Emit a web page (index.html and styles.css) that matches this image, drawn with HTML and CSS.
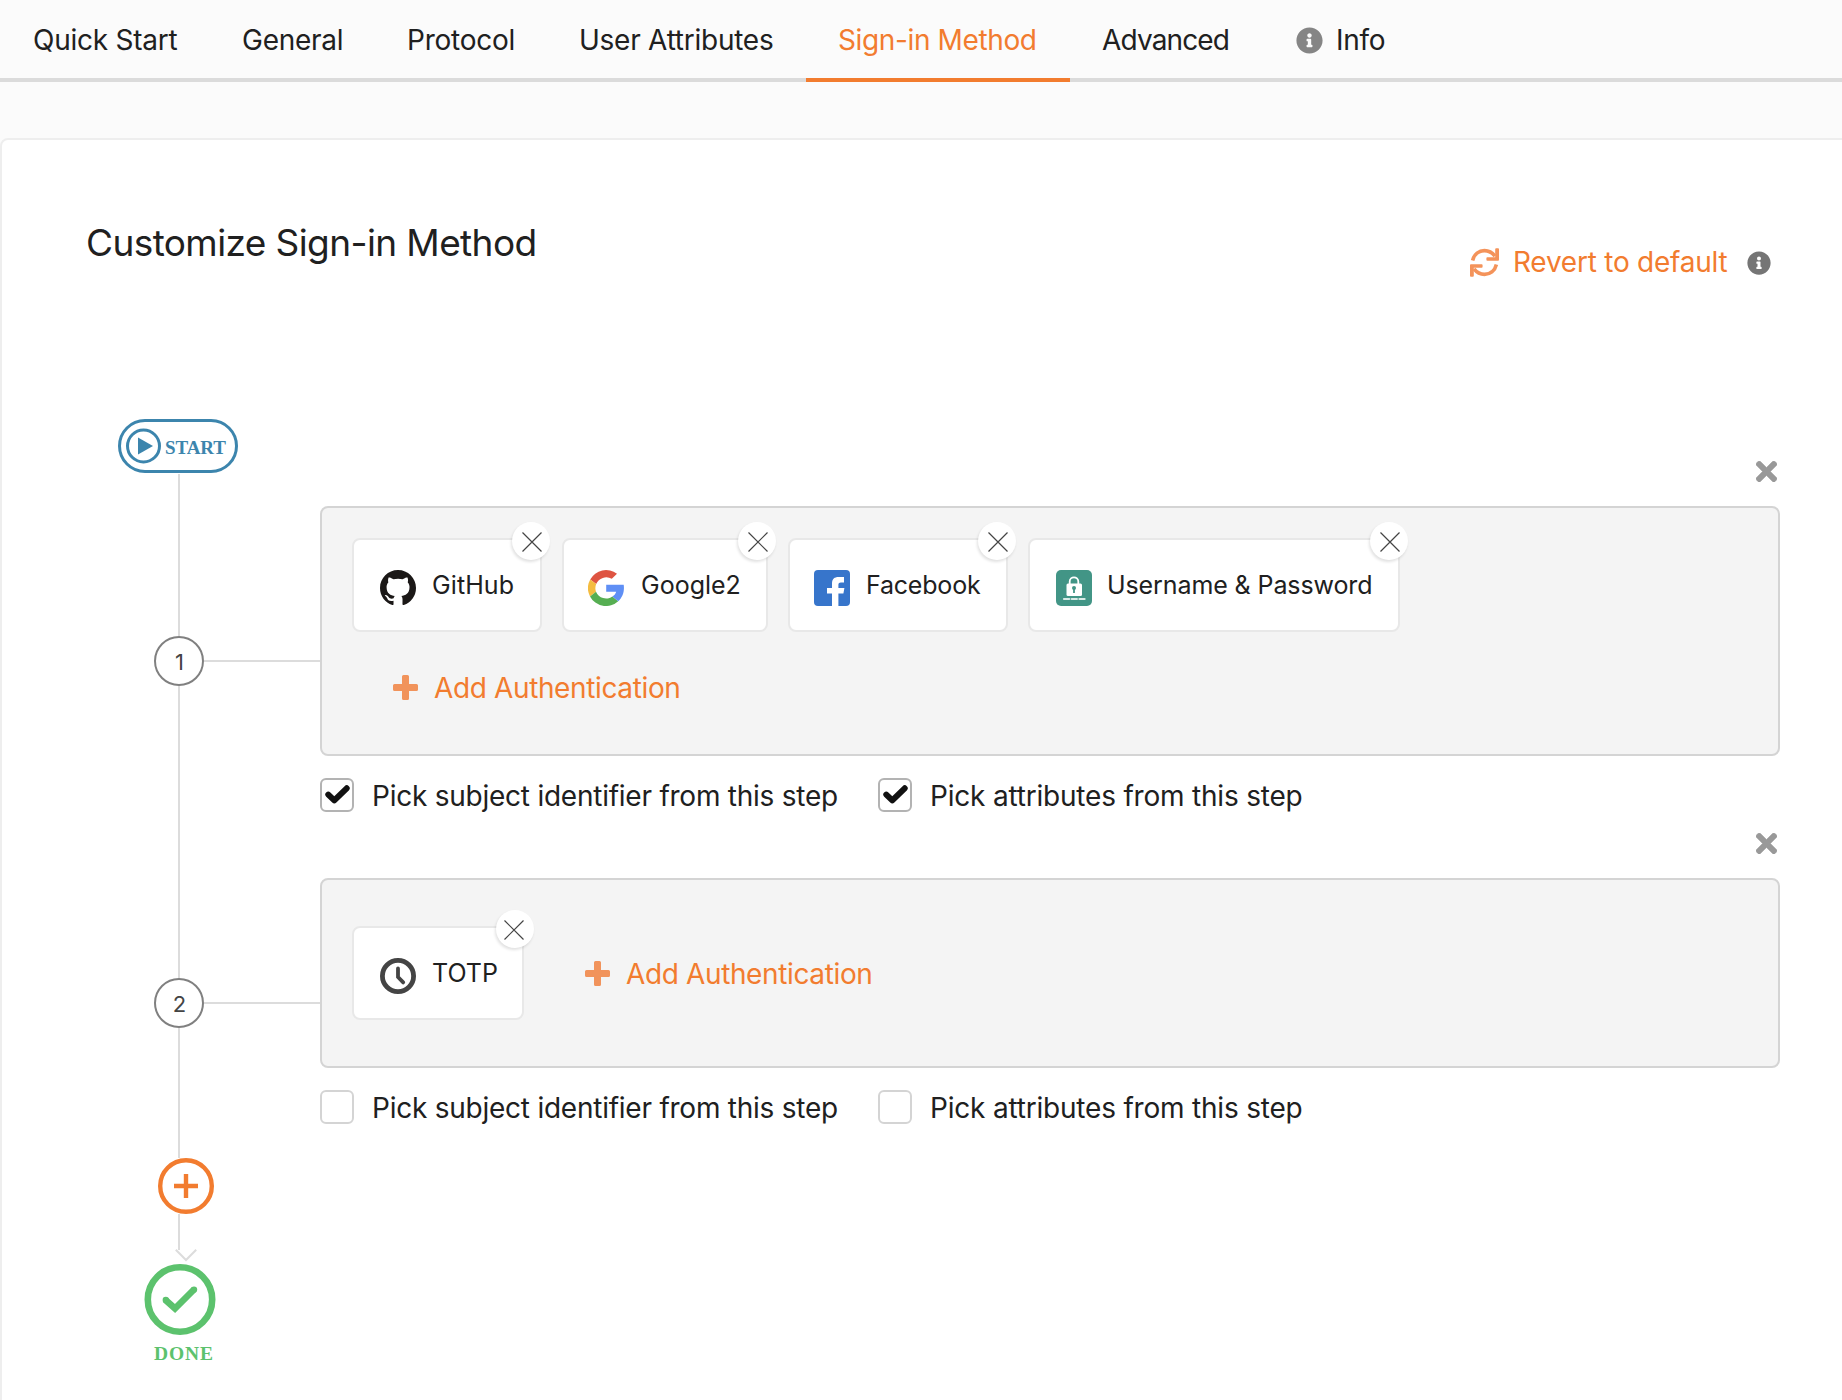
FILE: index.html
```html
<!DOCTYPE html>
<html lang="en">
<head>
<meta charset="utf-8">
<title>Sign-in Method</title>
<link rel="stylesheet" href="styles.css">
</head>
<body>
<svg class="defs" width="0" height="0" aria-hidden="true">
  <symbol id="i-info" viewBox="0 0 512 512"><path fill="currentColor" d="M256 8C119 8 8 119 8 256s111 248 248 248 248-111 248-248S393 8 256 8zm0 110c23.200 0 42 18.800 42 42s-18.800 42-42 42-42-18.800-42-42 18.800-42 42-42zm56 254c0 6.600-5.400 12-12 12h-88c-6.600 0-12-5.400-12-12v-24c0-6.600 5.400-12 12-12h12v-64h-12c-6.600 0-12-5.400-12-12v-24c0-6.600 5.400-12 12-12h64c6.600 0 12 5.400 12 12v100h12c6.600 0 12 5.400 12 12v24z"/></symbol>
  <symbol id="i-times" viewBox="0 0 352 352"><path fill="currentColor" stroke="currentColor" stroke-width="8" d="M242.720 176l100.070-100.070c12.280-12.280 12.280-32.190 0-44.480l-22.240-22.240c-12.280-12.280-32.190-12.280-44.480 0L176 109.280 75.930 9.210c-12.280-12.280-32.190-12.280-44.480 0L9.210 31.450c-12.280 12.280-12.280 32.190 0 44.480L109.280 176 9.210 276.070c-12.280 12.280-12.280 32.190 0 44.480l22.240 22.240c12.280 12.280 32.200 12.280 44.480 0L176 242.720l100.070 100.070c12.280 12.280 32.200 12.280 44.480 0l22.240-22.240c12.280-12.280 12.280-32.190 0-44.480L242.720 176z"/></symbol>
  <symbol id="i-plus" viewBox="0 0 25 25"><path fill="currentColor" d="M10.500 0h4a1.500 1.500 0 0 1 1.500 1.500V9h7.500a1.500 1.500 0 0 1 1.500 1.500v4a1.500 1.500 0 0 1-1.500 1.500H16v7.500a1.500 1.500 0 0 1-1.500 1.500h-4A1.500 1.500 0 0 1 9 23.500V16H1.500A1.500 1.500 0 0 1 0 14.500v-4A1.500 1.500 0 0 1 1.500 9H9V1.500A1.500 1.500 0 0 1 10.500 0z"/></symbol>
  <symbol id="i-close" viewBox="0 0 20 20"><path d="M.5.5l19 19M19.500.5l-19 19" stroke="currentColor" stroke-width="1.200"/></symbol>
  <symbol id="i-tick" viewBox="0 0 25 19"><path d="M3.300 9.600l6 5.800L21.700 3.300" fill="none" stroke="currentColor" stroke-width="6" stroke-linecap="round" stroke-linejoin="round"/></symbol>
</svg>

<nav class="tabs">
  <a class="tab"><span>Quick Start</span></a>
  <a class="tab"><span>General</span></a>
  <a class="tab"><span>Protocol</span></a>
  <a class="tab"><span>User Attributes</span></a>
  <a class="tab tab-active"><span>Sign-in Method</span></a>
  <a class="tab tab-advanced"><span>Advanced</span></a>
  <a class="tab tab-info"><svg class="tab-icon"><use href="#i-info"/></svg><span>Info</span></a>
</nav>

<main class="panel">
  <header class="panel-head">
    <h1 class="title">Customize Sign-in Method</h1>
    <div class="revert">
      <svg class="revert-icon" viewBox="0 0 29 29"><g fill="none" stroke="currentColor" stroke-width="3.600"><path d="M2.600 12.500C4.200 6 9 2.600 14.500 2.600c4.500 0 7.800 2 10.500 5.500"/><path d="M26.400 16.500c-1.600 6.500-6.400 9.900-11.900 9.900-4.500 0-7.800-2-10.500-5.500"/></g><path fill="currentColor" d="M25.200 1.200A.9.900 0 0 1 26.100.300h2A.9.900 0 0 1 29 1.200v10.600a.9.900 0 0 1-.9.900H17.300a.9.900 0 0 1-.9-.9V10.200a.9.900 0 0 1 .9-.9h7.900zM3.800 27.800a.9.900 0 0 1-.9.900h-2a.9.900 0 0 1-.9-.9V17.200a.9.900 0 0 1 .9-.9h10.800a.9.900 0 0 1 .9.900v1.600a.9.900 0 0 1-.9.900H3.800z"/></svg>
      <span class="revert-text">Revert to default</span>
      <svg class="revert-info"><use href="#i-info"/></svg>
    </div>
  </header>

  <div class="flow">
    <div class="rail">
      <svg class="start" viewBox="0 0 120 54"><g fill="none" stroke="#3c85ad" stroke-width="3"><rect x="1.500" y="1.500" width="117" height="51" rx="25.500"/><circle cx="25.500" cy="27" r="16"/></g><path d="M20 18.500v17L35 27z" fill="#3c85ad"/><text class="start-text" x="47" y="35" textLength="61">START</text></svg>
      <i class="line line-a"></i>
      <span class="node">1</span>
      <i class="line line-b"></i>
      <span class="node">2</span>
      <i class="line line-c"></i>
      <svg class="add-step" viewBox="0 0 56 56"><g fill="none" stroke="#f27c2f" stroke-width="4.400"><circle cx="28" cy="28" r="25.800"/><path d="M16 28h24M28 16v24"/></g></svg>
      <i class="line line-d"></i>
      <svg class="arrow" viewBox="0 0 22 13"><path d="M.8.800L11 11 21.200.800" fill="none" stroke="#dcdcdc" stroke-width="2"/></svg>
      <svg class="done" viewBox="0 0 72 106"><circle cx="36" cy="35.500" r="32.200" fill="none" stroke="#5cc26d" stroke-width="6.600"/><path d="M21.500 36L31 44.500 50 25.500" fill="none" stroke="#5cc26d" stroke-width="6.600"/><circle cx="21.800" cy="36" r="3.200" fill="#5cc26d"/><circle cx="50" cy="25.600" r="3.200" fill="#5cc26d"/><text class="done-text" x="10" y="96" textLength="59">DONE</text></svg>
    </div>

    <div class="steps">
      <section class="step">
        <svg class="step-x"><use href="#i-times"/></svg>
        <div class="box box-tall">
          <div class="chips">
            <div class="chip chip-github">
              <svg class="chip-icon" viewBox="0 0 16 16"><path fill="#1b1817" d="M8 0C3.580 0 0 3.580 0 8c0 3.540 2.290 6.530 5.470 7.590.4.070.55-.17.55-.38 0-.19-.01-.82-.01-1.490-2.010.37-2.530-.49-2.690-.94-.09-.23-.48-.94-.82-1.130-.28-.15-.68-.52-.01-.53.63-.01 1.080.58 1.230.82.72 1.210 1.870.87 2.330.66.070-.52.28-.87.51-1.070-1.780-.2-3.640-.89-3.640-3.950 0-.87.31-1.590.82-2.150-.08-.2-.36-1.020.08-2.120 0 0 .67-.21 2.200.82.640-.18 1.320-.27 2-.27s1.360.090 2 .27c1.530-1.040 2.200-.82 2.200-.82.440 1.100.16 1.920.08 2.120.51.56.82 1.270.82 2.150 0 3.070-1.870 3.750-3.650 3.950.29.25.54.73.54 1.480 0 1.070-.01 1.930-.01 2.200 0 .21.15.46.55.38A8.010 8.010 0 0 0 16 8c0-4.420-3.580-8-8-8z"/></svg>
              <span>GitHub</span><b class="chip-x"><svg><use href="#i-close"/></svg></b>
            </div>
            <div class="chip chip-google">
              <svg class="chip-icon" viewBox="0 0 36 36"><path fill="#de5442" d="M2.200 9.500A18 18 0 0 1 29 3.800l-5.200 5A11 11 0 0 0 8.200 14z"/><path fill="#f4bc40" d="M2.200 9.500A18 18 0 0 0 2 26.400l6-4.600A11 11 0 0 1 8.200 14z"/><path fill="#56ae52" d="M2 26.400A18 18 0 0 0 30.200 31.200l-5.800-4.600A11 11 0 0 1 8 21.800z"/><path fill="#5f8ff5" d="M18.200 14.800h17.500c.9 6-.7 12.300-5.500 16.400l-5.800-4.600c2-1.300 3.300-2.900 3.800-4.800h-10z"/></svg>
              <span>Google2</span><b class="chip-x"><svg><use href="#i-close"/></svg></b>
            </div>
            <div class="chip chip-facebook">
              <svg class="chip-icon" viewBox="0 0 36 36"><rect width="36" height="36" rx="4" fill="#3775cb"/><path fill="#fff" d="M18 36V23.500h-5V18h5v-4.500C18 9 20.500 7 24.500 7H30v5.500h-3c-2.200 0-2.600 1-2.600 2.500v3h6l-1 5.500h-5V36z"/></svg>
              <span>Facebook</span><b class="chip-x"><svg><use href="#i-close"/></svg></b>
            </div>
            <div class="chip chip-password">
              <svg class="chip-icon" viewBox="0 0 36 36"><rect width="36" height="36" rx="5" fill="#429586"/><path d="M13.700 15v-3.500c0-5.600 8.600-5.600 8.600 0V15" fill="none" stroke="#fff" stroke-width="1.800"/><rect x="10.500" y="13.500" width="15.500" height="12.500" rx="1.500" fill="#fff"/><circle cx="18" cy="18" r="2" fill="#429586"/><path d="M18 18v5" stroke="#429586" stroke-width="1.800"/><path d="M8 29h5.200M15.700 29h5.200M23.400 29h5.200" stroke="#d7eae6" stroke-width="2.200" stroke-linecap="round"/></svg>
              <span>Username &amp; Password</span><b class="chip-x"><svg><use href="#i-close"/></svg></b>
            </div>
          </div>
          <a class="add add-below"><svg class="add-icon"><use href="#i-plus"/></svg><span>Add Authentication</span></a>
        </div>
        <div class="options">
          <label class="opt opt-subject"><i class="check check-on"><svg><use href="#i-tick"/></svg></i><span>Pick subject identifier from this step</span></label>
          <label class="opt opt-attrs"><i class="check check-on"><svg><use href="#i-tick"/></svg></i><span>Pick attributes from this step</span></label>
        </div>
      </section>

      <section class="step">
        <svg class="step-x"><use href="#i-times"/></svg>
        <div class="box box-short">
          <div class="chip chip-totp">
            <svg class="chip-icon" viewBox="0 0 36 36"><circle cx="18" cy="18" r="15.600" fill="none" stroke="#444" stroke-width="4.800"/><path d="M18 10.500V19l5.200 5.400" fill="none" stroke="#444" stroke-width="3.800" stroke-linecap="round"/></svg>
            <span>TOTP</span><b class="chip-x"><svg><use href="#i-close"/></svg></b>
          </div>
          <a class="add"><svg class="add-icon"><use href="#i-plus"/></svg><span>Add Authentication</span></a>
        </div>
        <div class="options">
          <label class="opt opt-subject"><i class="check"></i><span>Pick subject identifier from this step</span></label>
          <label class="opt opt-attrs"><i class="check"></i><span>Pick attributes from this step</span></label>
        </div>
      </section>
    </div>
  </div>
</main>
</body>
</html>
```
FILE: styles.css
```css
* { box-sizing: border-box; }
body {
  margin: 0;
  height: 1400px;
  overflow: hidden;
  background: #fbfbfb;
  color: #202020;
  font-family: Inter, "Liberation Sans", sans-serif;
  font-size: 28px;
}
svg { display: block; flex: none; }
.defs { position: absolute; }

.tabs {
  display: grid;
  grid-template-columns: 209px 165px 172px 259px 264px 193px 200px;
  height: 82px;
  padding-left: 1px;
  box-shadow: inset 0 -4px #dbdbdb;
  letter-spacing: -.25px;
}
.tab { display: flex; align-items: center; padding: 0 0 2px 32px; white-space: nowrap; }
.tab-active { color: #f27c2f; box-shadow: inset 0 -4px #f27c2f; letter-spacing: -.37px; }
.tab-advanced { letter-spacing: -.85px; }
.tab-info { gap: 13px; padding-left: 33px; }
.tab-icon { width: 27px; height: 27px; color: #858585; }

.panel {
  margin-top: 56px;
  height: 1290px;
  width: 1850px;
  border: 2px solid #eee;
  border-radius: 8px;
  background: #fff;
}
.panel-head { display: flex; justify-content: space-between; padding: 79px 77px 0 84px; height: 279px; }
.title { margin: 0; font-size: 37px; font-weight: 400; line-height: 48px; letter-spacing: -.6px; white-space: nowrap; }
.revert { display: flex; align-items: center; height: 36px; margin-top: 25px; color: #f27c2f; }
.revert-icon { width: 29px; height: 29px; color: #f4935a; }
.revert-text { margin-left: 14px; width: 234px; letter-spacing: -.24px; white-space: nowrap; }
.revert-info { width: 24px; height: 24px; margin-top: 1px; color: #757575; }

.flow { display: grid; grid-template-columns: 318px 1460px; }
.rail { display: flex; flex-direction: column; align-items: flex-start; }
.start { width: 120px; height: 54px; margin-left: 116px; }
.start-text { font: bold 19px "Liberation Serif", serif; fill: #3c85ad; }
.done-text { font: bold 19.5px "Liberation Serif", serif; fill: #5cc26d; }
.line { width: 2px; margin-left: 176px; background: #dcdcdc; }
.line-a { height: 162px; margin-top: 1px; }
.line-b { height: 292px; }
.line-c { height: 130px; }
.line-d { height: 36px; }
.node {
  position: relative;
  display: flex; align-items: center; justify-content: center;
  width: 50px; height: 50px; margin-left: 152px; padding: 2px 0 0 1px;
  border: 2px solid #808080; border-radius: 50%;
  color: #444; font-size: 22px;
}
.node::after { content: ""; position: absolute; left: 48px; top: 22px; width: 116px; height: 2px; background: #dcdcdc; }
.add-step { width: 56px; height: 56px; margin-left: 156px; }
.arrow { width: 22px; height: 13px; margin: -1px 0 0 173px; }
.done { width: 72px; height: 106px; margin: 2px 0 0 142px; }

.steps { padding-top: 42px; }
.step-x { width: 21px; height: 21px; margin: 0 3px 24px auto; color: #999; overflow: visible; }
.box { border: 2px solid #d4d4d4; border-radius: 8px; background: #f4f4f4; padding: 30px; }
.box-tall { height: 250px; }
.box-short { height: 190px; display: flex; align-items: center; gap: 61px; }
.chips { display: flex; gap: 20px; }
.chip {
  position: relative;
  display: flex; align-items: center; gap: 16px;
  height: 94px; padding-left: 26px;
  border: 2px solid #e8e8e8; border-radius: 8px;
  background: #fff; font-size: 25px; white-space: nowrap;
}
.chip > span { padding-bottom: 1px; }
.chip-icon { width: 36px; height: 36px; margin-top: 6px; }
.chip-github { width: 190px; letter-spacing: .1px; }
.chip-google { width: 206px; padding-left: 24px; gap: 17px; }
.chip-facebook { width: 220px; padding-left: 24px; letter-spacing: -.2px; }
.chip-password { width: 372px; gap: 15px; letter-spacing: -.1px; }
.chip-totp { width: 172px; }
.chip-x {
  position: absolute; top: -18px; right: -10px;
  display: flex; align-items: center; justify-content: center;
  width: 38px; height: 38px; padding: 2px 0 0 2px;
  border-radius: 50%; background: #fff; color: #444;
  box-shadow: -1px 2px 3px rgba(0, 0, 0, .12);
}
.chip-x svg { width: 20px; height: 20px; }
.chip-totp .chip-x { right: -12px; padding: 2px 2px 0 0; }
.add { display: flex; align-items: center; gap: 16px; height: 36px; color: #f27c2f; letter-spacing: -.37px; white-space: nowrap; }
.add span, .opt span { padding-top: 2px; }
.add-below { margin: 37px 0 0 41px; }
.add-icon { width: 25px; height: 25px; color: #f1935b; }

.options { display: flex; height: 77px; padding-top: 22px; }
.opt { display: flex; height: 34px; align-items: center; gap: 18px; white-space: nowrap; }
.opt-subject { width: 558px; letter-spacing: -.24px; }
.opt-attrs { letter-spacing: -.2px; }
.check {
  display: flex; align-items: center; justify-content: center;
  width: 34px; height: 34px; padding: 0 0 2px 1px;
  border: 2px solid #d4d4d4; border-radius: 6px; background: #fff; color: #111;
}
.check-on { border-color: #b3b3b3; }
.check svg { width: 25px; height: 19px; }
```
